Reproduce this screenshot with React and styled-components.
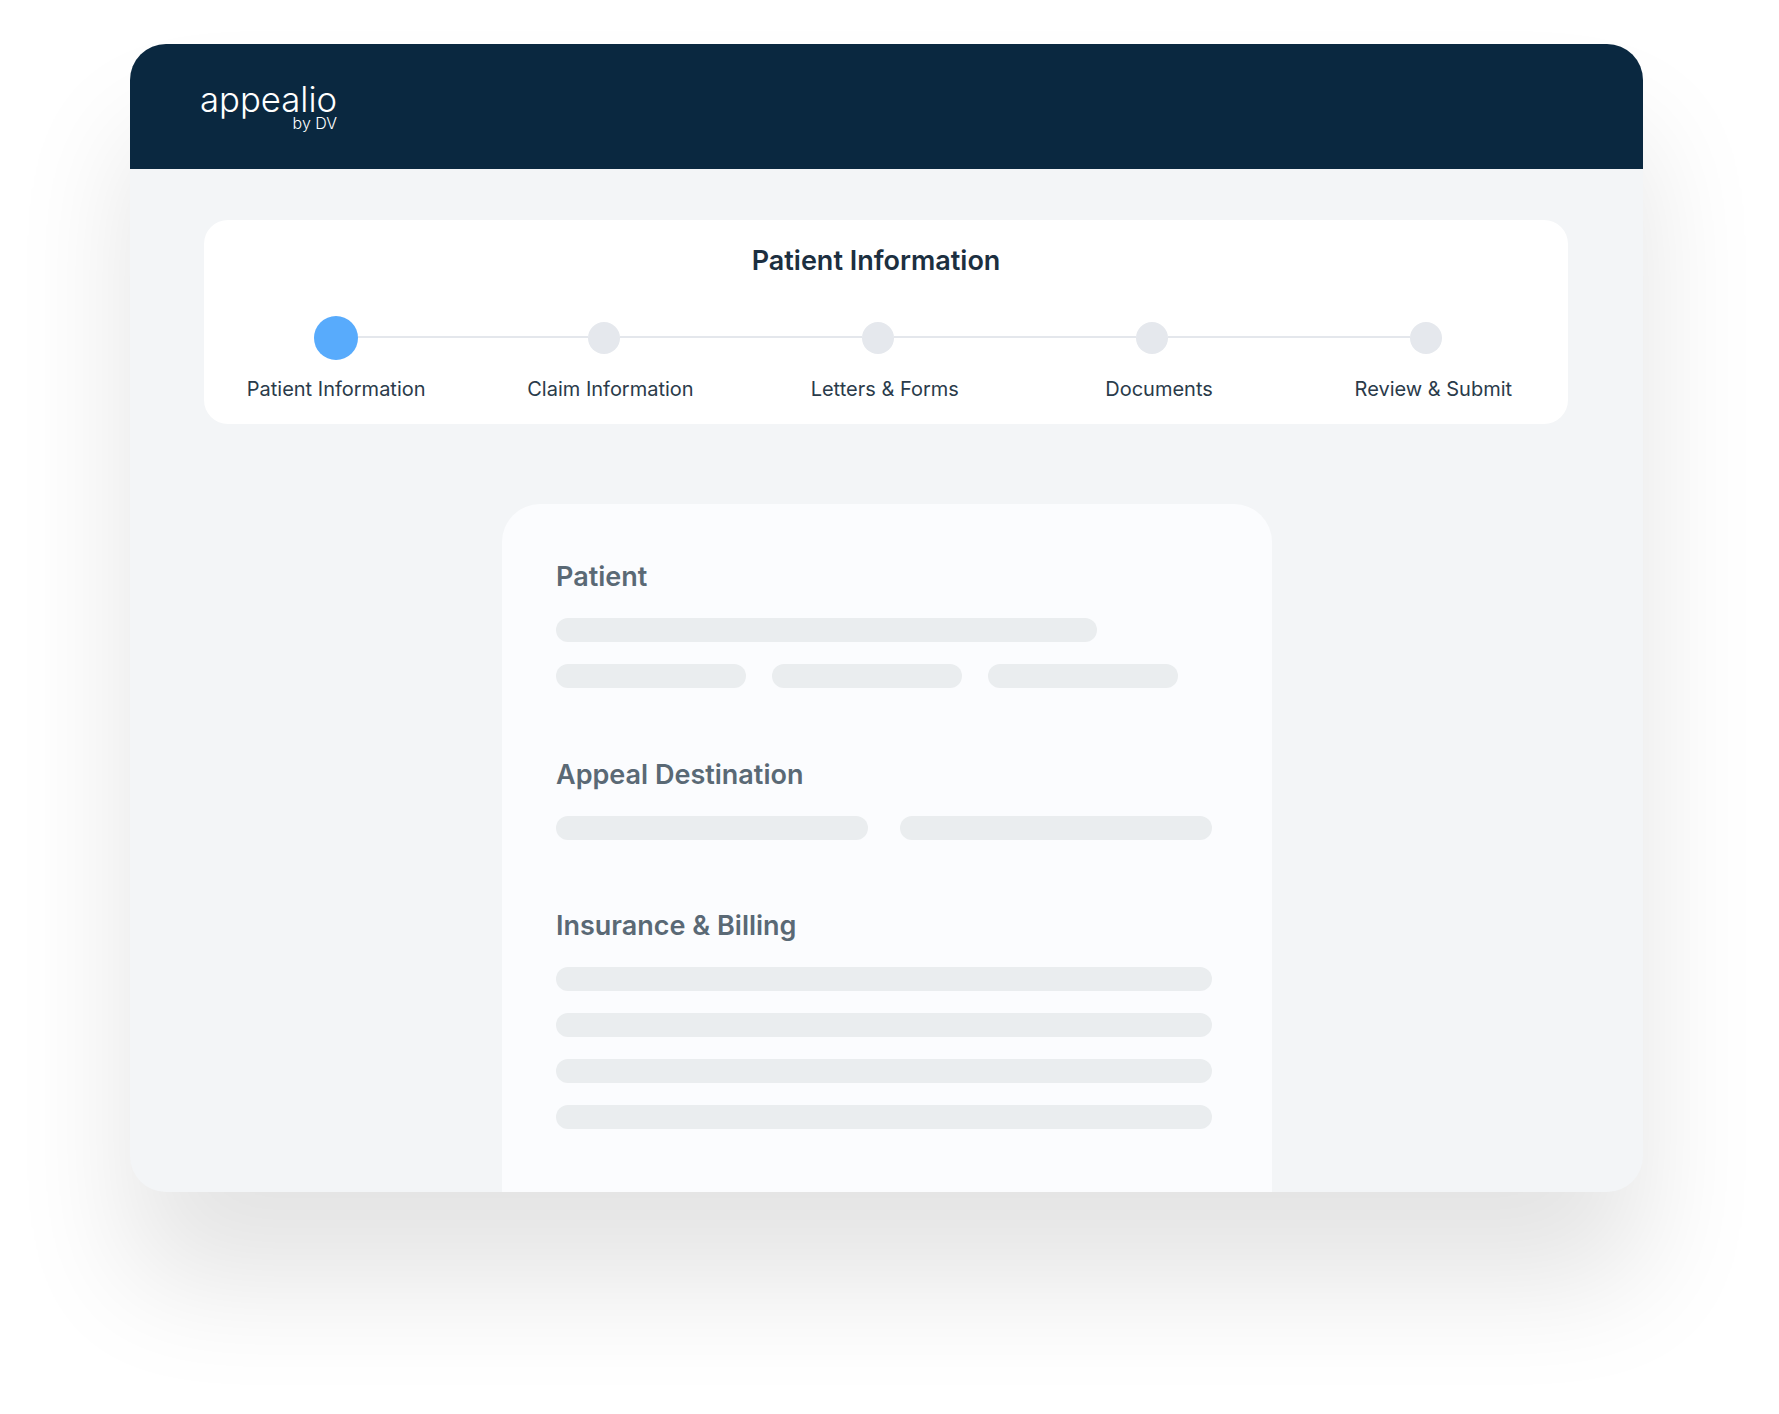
import React from "react";
import styled, { createGlobalStyle } from "styled-components";

const Global = createGlobalStyle`
  html, body { margin: 0; padding: 0; background: #fff; }
  body { font-family: Inter, "Noto Sans", sans-serif; height: 1414px; overflow: hidden; }
`;
const Page = styled.main`
  padding: 44px 0 0 130px;
`;
const Window = styled.div`
  width: 1513px;
  height: 1148px;
  border-radius: 36px;
  background: #f3f5f7;
  overflow: hidden;
  box-shadow: 0 90px 120px rgba(0, 0, 0, 0.11);
  display: flex;
  flex-direction: column;
`;
const Header = styled.header`
  height: 125px;
  flex: none;
  background: #0a2840;
  padding: 38px 0 0 70px;
  box-sizing: border-box;
`;
const Logo = styled.div`
  display: inline-flex;
  flex-direction: column;
  align-items: flex-end;
  color: #fff;
`;
const LogoName = styled.span`
  font-size: 34.7px;
  line-height: 34px;
  font-weight: 300;
`;
const LogoSub = styled.span`
  font-size: 16px;
  line-height: 14px;
  font-weight: 300;
`;
const Content = styled.div`
  padding: 51px 75px 0 74px;
  display: flex;
  flex-direction: column;
`;
const StepperCard = styled.section`
  height: 204px;
  box-sizing: border-box;
  background: #fff;
  border-radius: 24px;
  padding-top: 25px;
`;
const StepperTitle = styled.h1`
  margin: 0 20px 39px 0;
  font-size: 27px;
  line-height: 32px;
  font-weight: 600;
  color: #1c2f40;
  text-align: center;
`;
const Track = styled.div`
  display: flex;
  align-items: center;
  height: 44px;
  margin-left: 110px;
`;
const Dot = styled.span`
  flex: none;
  width: ${(p) => (p.$active ? 44 : 32)}px;
  height: ${(p) => (p.$active ? 44 : 32)}px;
  border-radius: 50%;
  background: ${(p) => (p.$active ? "#58abfc" : "#e5e8ed")};
`;
const Connector = styled.span`
  flex: none;
  width: ${(p) => p.$w}px;
  height: 2px;
  margin-bottom: 2px;
  background: #e4e7ec;
`;
const Labels = styled.div`
  display: grid;
  grid-template-columns: repeat(5, 274.3px);
  margin: 17px 0 0 -5px;
`;
const Label = styled.span`
  text-align: center;
  font-size: 20px;
  line-height: 24px;
  color: #2a3b4a;
`;
const FormCard = styled.section`
  margin: 80px 0 0 298px;
  width: 770px;
  height: 720px;
  flex: none;
  box-sizing: border-box;
  background: #fbfcfe;
  border-radius: 38px 38px 0 0;
  padding: 57px 0 0 54px;
`;
const Group = styled.div`
  margin-bottom: ${(p) => p.$after}px;
`;
const Heading = styled.h2`
  margin: 0 0 25px;
  font-size: 27px;
  line-height: 32px;
  font-weight: 600;
  color: #5a6975;
`;
const Rows = styled.div`
  display: flex;
  flex-direction: column;
  gap: 22px;
`;
const Row = styled.div`
  display: flex;
  gap: ${(p) => p.$gap || 0}px;
`;
const Bar = styled.div`
  width: ${(p) => p.$w}px;
  height: 24px;
  border-radius: 12px;
  background: #eaedef;
`;

const steps = ["Patient Information", "Claim Information", "Letters & Forms", "Documents", "Review & Submit"];
const gaps = [230, 242, 242, 242];

export default function App() {
  return (
    <Page>
      <Global />
      <Window>
        <Header>
          <Logo>
            <LogoName>appealio</LogoName>
            <LogoSub>by DV</LogoSub>
          </Logo>
        </Header>
        <Content>
          <StepperCard>
            <StepperTitle>Patient Information</StepperTitle>
            <Track>
              {steps.map((s, i) => (
                <React.Fragment key={s}>
                  <Dot $active={i === 0} />
                  {i < 4 && <Connector $w={gaps[i]} />}
                </React.Fragment>
              ))}
            </Track>
            <Labels>
              {steps.map((s) => (
                <Label key={s}>{s}</Label>
              ))}
            </Labels>
          </StepperCard>
          <FormCard>
            <Group $after={71}>
              <Heading>Patient</Heading>
              <Rows>
                <Row><Bar $w={541} /></Row>
                <Row $gap={26}><Bar $w={190} /><Bar $w={190} /><Bar $w={190} /></Row>
              </Rows>
            </Group>
            <Group $after={70}>
              <Heading>Appeal Destination</Heading>
              <Row $gap={32}><Bar $w={312} /><Bar $w={312} /></Row>
            </Group>
            <Group>
              <Heading>Insurance &amp; Billing</Heading>
              <Rows>
                <Bar $w={656} />
                <Bar $w={656} />
                <Bar $w={656} />
                <Bar $w={656} />
              </Rows>
            </Group>
          </FormCard>
        </Content>
      </Window>
    </Page>
  );
}
